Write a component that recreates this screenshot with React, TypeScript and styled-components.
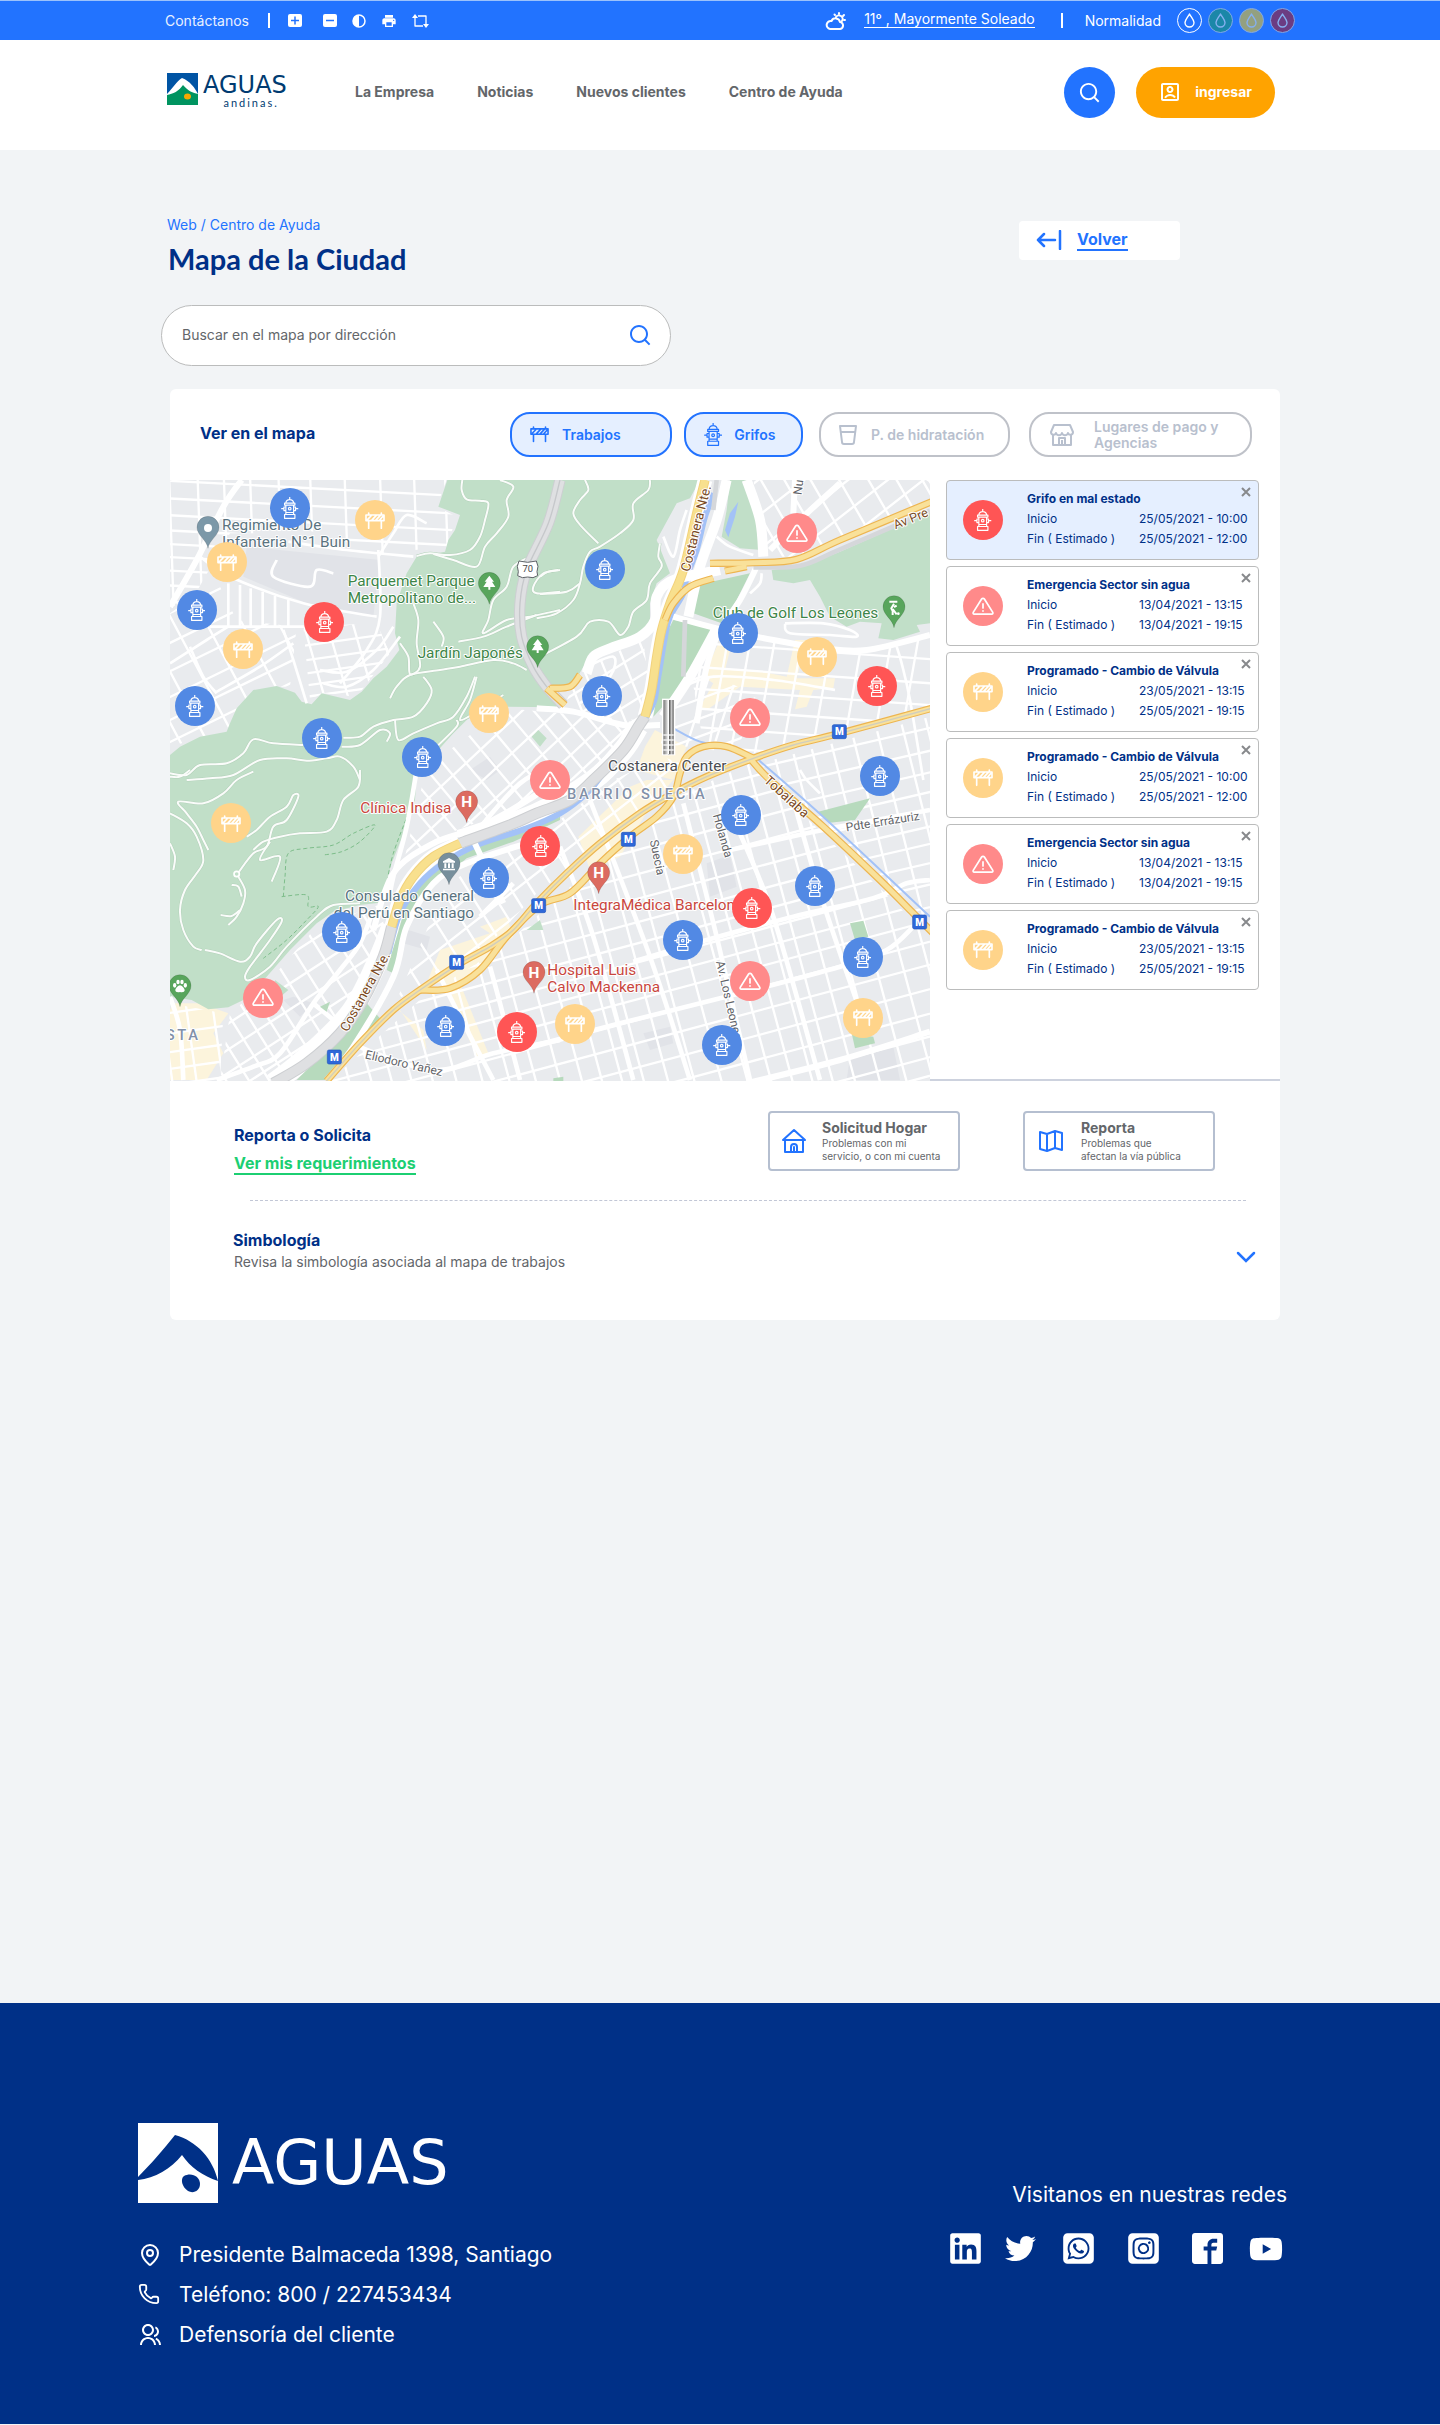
import React, { useState } from "react";
import styled, { createGlobalStyle, css } from "styled-components";
import { RiAccountBoxLine, RiGroupLine, RiSearchLine } from "react-icons/ri";
import { MdLocalPrintshop } from "react-icons/md";
import { FaLinkedin, FaTwitter, FaSquareWhatsapp, FaSquareInstagram, FaYoutube } from "react-icons/fa6";
import { ImFacebook2 } from "react-icons/im";
import { MapPin as MapPinIcon, Phone } from "lucide-react";

const color = {
  blue: "#2273ff",
  navy: "#003087",
  paleBlue: "#e5efff",
  gray: "#63666a",
  muted: "#b5bfd0",
  line: "#bbbcbc",
  page: "#f2f4f6",
  orange: "#ffa300",
  green: "#1ccf72",
};

const GlobalStyle = createGlobalStyle`
  *, *::before, *::after { box-sizing: border-box; }
  body {
    margin: 0;
    background: ${color.page};
    color: ${color.gray};
    font-family: Inter, "Liberation Sans", sans-serif;
    font-size: 14px;
    line-height: 20px;
  }
  button, input { font: inherit; color: inherit; }
  button { cursor: pointer; padding: 0; border: 0; background: none; }
  a { color: inherit; text-decoration: none; }
  h1, h2, h3, p, ul, dl, dd { margin: 0; padding: 0; }
  ul { list-style: none; }
  svg { display: block; flex: none; }
`;

/* ---------- Icons ---------- */

const HydrantIcon = ({ height = 22 }: { height?: number }) => (
  <svg height={height} viewBox="-1 -1 54 68" fill="none" stroke="currentColor" strokeWidth="3.600" strokeLinejoin="round" strokeLinecap="round">
    <path d="M26 0v6M14 17c1-7 5-10 12-10s11 3 12 10M10 18h32v6H10zM14 24v29M38 24v29M14 30H8v11h6M38 30h6v11h-6M8 35H1M44 35h7M14 47h24M10 53h32v12H10z" />
    <circle cx="26" cy="35" r="4" />
  </svg>
);

const BarrierIcon = ({ width = 20 }: { width?: number }) => (
  <svg width={width} viewBox="0 0 60 52" fill="none" stroke="currentColor" strokeWidth="5" strokeLinejoin="round" strokeLinecap="round">
    <path d="M3 9h54v17H3zM11 3v6M49 3v6M11 27v22M49 27v22M8 22l10-10M20 25l14-15M32 25l14-15M44 24l9-10" />
  </svg>
);

const AlertIcon = ({ width = 22 }: { width?: number }) => (
  <svg width={width} viewBox="0 0 64 54" fill="none" stroke="currentColor" strokeWidth="5" strokeLinejoin="round" strokeLinecap="round">
    <path d="M28 6 4 44c-2 4 0 6 4 6h48c4 0 6-2 4-6L36 6c-2-3-6-3-8 0z" />
    <path d="M32 20v12M32 40v1" />
  </svg>
);

const CupIcon = () => (
  <svg width="18" height="20" viewBox="0 0 18 20" fill="none" stroke="currentColor" strokeWidth="2" strokeLinejoin="round">
    <path d="M1 1h16l-2 16c0 1-1 2-2 2H5c-1 0-2-1-2-2zM2 7h14" />
  </svg>
);

const ShopIcon = () => (
  <svg width="26" height="24" viewBox="0 0 26 24" fill="none" stroke="currentColor" strokeWidth="2" strokeLinejoin="round">
    <path d="M5 2h16l3 7c0 3-4 4-5 1-1 3-5 3-6 0-1 3-5 3-6 0-1 3-5 2-5-1zM4 12v10h18V12M10 22v-7h6v7M13 17v5" />
  </svg>
);

const HouseIcon = () => (
  <svg width="26" height="26" viewBox="0 0 26 26" fill="none" stroke={color.blue} strokeWidth="2" strokeLinejoin="round" strokeLinecap="round">
    <path d="M2 12 13 2l11 10zM4 13v11h18V13M10 24v-5c0-4 6-4 6 0v5M13 19v5" />
  </svg>
);

const FoldedMapIcon = () => (
  <svg width="24" height="22" viewBox="0 0 24 22" fill="none" stroke={color.blue} strokeWidth="2" strokeLinejoin="round" strokeLinecap="round">
    <path d="m1 2 7 2 8-3 7 2v17l-7-2-8 3-7-2zM8 4v17M16 1v17" />
  </svg>
);

const BackIcon = () => (
  <svg width="26" height="20" viewBox="0 0 26 20" fill="none" stroke={color.blue} strokeWidth="2.500" strokeLinejoin="round" strokeLinecap="round">
    <path d="M24 1v18M19 10H2M8 4l-6 6 6 6" />
  </svg>
);

const WeatherIcon = () => (
  <svg width="21" height="18" viewBox="0 0 21 18" fill="none" stroke="#fff" strokeWidth="2" strokeLinecap="round" strokeLinejoin="round">
    <path d="M5 17h9a3.500 3.500 0 0 0 1-7 4.500 4.500 0 0 0-8.500-1A4 4 0 0 0 5 17zM11 5a3.500 3.500 0 0 1 6 4" />
    <path d="M14 1v1M19 3l-1 1M20 8h-1M9.500 2.500l.5.5" />
  </svg>
);

const CloseIcon = () => (
  <svg width="10" height="10" viewBox="0 0 10 10" fill="none" stroke="currentColor" strokeWidth="2">
    <path d="m1 1 8 8M9 1 1 9" />
  </svg>
);

const ChevronIcon = () => (
  <svg width="20" height="12" viewBox="0 0 20 12" fill="none" stroke={color.blue} strokeWidth="2.500" strokeLinecap="round">
    <path d="m2 2 8 8 8-8" />
  </svg>
);

const ZoomBoxIcon = ({ plus }: { plus?: boolean }) => (
  <svg width="14" height="13" viewBox="0 0 14 13">
    <rect width="14" height="13" rx="2" fill="#fff" />
    <path d={plus ? "M3 6.500h8M7 2.500v8" : "M3 6.500h8"} stroke={color.blue} strokeWidth="1.500" />
  </svg>
);

const ContrastIcon = () => (
  <svg width="14" height="14" viewBox="0 0 14 14">
    <circle cx="7" cy="7" r="6" fill="none" stroke="#fff" strokeWidth="1.500" />
    <path d="M7 1a6 6 0 0 0 0 12z" fill="#fff" />
  </svg>
);

const ResetIcon = () => (
  <svg width="17" height="14" viewBox="0 0 17 14" fill="none" stroke="#fff" strokeWidth="1.300" strokeLinejoin="round">
    <path d="M3 3v9h8M6 2h8v9" />
    <path d="M0 4 3 0l3 4zM11 10l3 4 3-4z" fill="#fff" stroke="none" />
  </svg>
);

const DropIcon = () => (
  <svg width="11" height="15" viewBox="0 0 11 15" fill="none" stroke="currentColor" strokeWidth="1.400" strokeLinejoin="round">
    <path d="M5.500 1C4 4 1 7 1 9.500a4.500 4.500 0 0 0 9 0C10 7 7 4 5.500 1z" />
  </svg>
);

/* ---------- Top bar ---------- */

const TopBar = styled.div`
  display: flex;
  justify-content: space-between;
  align-items: center;
  height: 40px;
  padding: 0 145px 0 165px;
  border-top: 1px solid #9cc2fb;
  background: ${color.blue};
  color: #fff;
`;

const BarGroup = styled.div`
  display: flex;
  align-items: center;
`;

const BarLink = styled.a`
  opacity: 0.9;
`;

const BarSeparator = styled.span<{ $before: number; $after: number }>`
  width: 2px;
  height: 15px;
  margin: 0 ${(p) => p.$after}px 0 ${(p) => p.$before}px;
  background: #fff;
`;

const BarTools = styled.div`
  display: flex;
  align-items: center;
  gap: 15px;
`;

const BarTool = styled.button`
  display: flex;
  &:first-child { margin-right: 6px; }
`;

const WeatherLink = styled.a`
  margin: 0 0 3px 18px;
  line-height: 17px;
  border-bottom: 1px solid #fff;
`;

const Levels = styled.div`
  display: flex;
  gap: 6px;
  margin-left: 16px;
`;

const Level = styled.button<{ $fill: string; $on?: boolean }>`
  display: flex;
  align-items: center;
  justify-content: center;
  width: 25px;
  height: 25px;
  border-radius: 50%;
  border: 1px solid ${(p) => (p.$on ? "#fff" : "#80a8e8")};
  background: ${(p) => p.$fill};
  color: ${(p) => (p.$on ? "#fff" : "#86b0f0")};
`;

/* ---------- Header ---------- */

const HeaderBar = styled.header`
  display: flex;
  align-items: center;
  height: 110px;
  padding: 0 165px 6px 167px;
  background: #fff;
`;

const Brand = styled.a`
  display: flex;
  align-items: flex-start;
  gap: 5px;
  width: 188px;
  margin-top: -2px;
`;

const BrandWords = styled.span`
  display: flex;
  flex-direction: column;
  align-items: flex-end;
  color: #003b71;
`;

const BrandName = styled.span`
  font-family: "DejaVu Sans", sans-serif;
  font-size: 24px;
  line-height: 24px;
`;

const BrandSub = styled.span`
  padding-right: 8px;
  font-family: Lato, sans-serif;
  font-size: 11px;
  line-height: 12px;
  letter-spacing: 2px;
`;

const Nav = styled.nav`
  display: flex;
  gap: 43px;
  font-weight: 700;
`;

const HeaderActions = styled.div`
  display: flex;
  gap: 21px;
  margin-left: auto;
`;

const RoundButton = styled.button`
  display: flex;
  align-items: center;
  justify-content: center;
  width: 51px;
  height: 51px;
  border-radius: 50%;
  background: ${color.blue};
  color: #fff;
`;

const LoginButton = styled.button`
  display: flex;
  align-items: center;
  gap: 13px;
  height: 51px;
  padding: 0 23px 0 22px;
  border-radius: 26px;
  background: ${color.orange};
  color: #fff;
  font-weight: 700;
`;

/* ---------- Page head ---------- */

const Main = styled.main`
  padding: 65px 160px 683px 161px;
`;

const PageHead = styled.div`
  display: flex;
  justify-content: space-between;
  align-items: flex-start;
  margin: 0 100px 28px 6px;
`;

const Crumbs = styled.nav`
  color: ${color.blue};
`;

const Title = styled.h1`
  margin: 6px 0 0 1px;
  color: ${color.navy};
  font-family: Lato, Inter, sans-serif;
  font-size: 29px;
  line-height: 36px;
  font-weight: 700;
`;

const BackBox = styled.a`
  display: flex;
  align-items: center;
  gap: 15px;
  width: 161px;
  height: 39px;
  margin-top: 6px;
  padding: 0 0 2px 17px;
  border-radius: 4px;
  background: #fff;
  color: ${color.blue};
  font-size: 16px;
  font-weight: 700;
`;

const BackText = styled.span`
  line-height: 20px;
  border-bottom: 2px solid ${color.blue};
`;

const SearchForm = styled.form`
  display: flex;
  align-items: center;
  width: 510px;
  height: 61px;
  margin-bottom: 23px;
  padding: 0 18px 2px 20px;
  border: 1px solid ${color.line};
  border-radius: 31px;
  background: #fff;
  color: ${color.blue};
`;

const SearchInput = styled.input`
  flex: 1;
  min-width: 0;
  padding: 0;
  border: 0;
  outline: 0;
  background: none;
  color: ${color.gray};
  &::placeholder { color: ${color.gray}; opacity: 1; }
`;

/* ---------- Map card ---------- */

const Card = styled.section`
  margin-left: 9px;
  border-radius: 6px;
  background: #fff;
`;

const Toolbar = styled.div`
  display: flex;
  align-items: center;
  justify-content: space-between;
  height: 91px;
  padding: 0 28px 0 30px;
`;

const Heading = styled.h2`
  color: ${color.navy};
  font-size: 16px;
  line-height: 20px;
  font-weight: 700;
`;

const ToolbarHeading = styled(Heading)`
  padding-bottom: 3px;
`;

const Filters = styled.div`
  display: flex;
  gap: 16px;
`;

const FilterGroup = styled.div<{ $gap: number }>`
  display: flex;
  gap: ${(p) => p.$gap}px;
`;

const Chip = styled.button<{ $on: boolean; $width: number; $gap: number }>`
  display: flex;
  align-items: center;
  gap: ${(p) => p.$gap}px;
  width: ${(p) => p.$width}px;
  height: 45px;
  padding-left: 18px;
  border-radius: 20px;
  font-weight: 600;
  line-height: 16px;
  text-align: left;
  ${(p) =>
    p.$on
      ? css`
          border: 2px solid ${color.blue};
          background: ${color.paleBlue};
          color: ${color.blue};
        `
      : css`
          border: 2px solid #bfc2c9;
          background: #fff;
          color: #b8c0ce;
        `}
`;

const ChipText = styled.span<{ $narrow?: boolean }>`
  max-width: ${(p) => (p.$narrow ? "132px" : "none")};
`;

const MapRow = styled.div`
  display: grid;
  grid-template-columns: minmax(0, 1fr) 350px;
`;

const MapCanvas = styled.div`
  position: relative;
  height: 601px;
  overflow: hidden;
  border-radius: 2px 6px 0 0;
  background: #e9ebee;
`;

const MapArt = styled.svg`
  width: 100%;
  height: 100%;
`;

type Kind = "grifo" | "averia" | "trabajo" | "emergencia";

const kindColor: Record<Kind, string> = {
  grifo: "#5289e4",
  averia: "#ff5555",
  trabajo: "#ffd48a",
  emergencia: "#ff8a8a",
};

const MapPin = styled.button<{ $kind: Kind }>`
  position: absolute;
  display: flex;
  align-items: center;
  justify-content: center;
  width: 40px;
  height: 40px;
  margin: -20px 0 0 -20px;
  border-radius: 50%;
  background: ${(p) => kindColor[p.$kind]};
  color: #fff;
`;

const Badge = styled.span<{ $kind: Kind }>`
  display: flex;
  align-items: center;
  justify-content: center;
  width: 40px;
  height: 40px;
  border-radius: 50%;
  background: ${(p) => kindColor[p.$kind]};
  color: #fff;
`;

const SidePanel = styled.ul`
  display: flex;
  flex-direction: column;
  gap: 6px;
  padding: 0 21px 0 16px;
  border-bottom: 2px solid #cdd2de;
`;

const Notice = styled.li<{ $on?: boolean }>`
  display: grid;
  grid-template-columns: 64px minmax(0, 1fr);
  align-items: center;
  position: relative;
  height: 80px;
  padding-left: 16px;
  border: 1px solid ${color.line};
  border-radius: 4px;
  background: ${(p) => (p.$on ? color.paleBlue : "#fff")};
  color: ${color.navy};
  font-size: 12px;
`;

const NoticeText = styled.div`
  padding-bottom: 2px;
`;

const NoticeTitle = styled.h3`
  font-size: 12px;
  line-height: 20px;
  font-weight: 700;
`;

const NoticeTimes = styled.dl`
  display: grid;
  grid-template-columns: 112px 1fr;
  line-height: 20px;
`;

const CloseButton = styled.button`
  position: absolute;
  top: 6px;
  right: 7px;
  color: #87898c;
`;

/* ---------- Requests and symbols ---------- */

const Requests = styled.div`
  display: flex;
  align-items: flex-start;
  justify-content: space-between;
  padding: 30px 65px 25px 64px;
`;

const RequestIntro = styled.div`
  padding-top: 14px;
`;

const GreenLink = styled.a`
  display: inline-block;
  margin-top: 8px;
  border-bottom: 2px solid ${color.green};
  color: ${color.green};
  font-size: 16px;
  line-height: 20px;
  font-weight: 700;
`;

const RequestCards = styled.div`
  display: flex;
  gap: 63px;
`;

const RequestButton = styled.button<{ $gap: number }>`
  display: flex;
  align-items: center;
  gap: ${(p) => p.$gap}px;
  width: 192px;
  height: 60px;
  padding-left: ${(p) => p.$gap - 4}px;
  border: 2px solid ${color.muted};
  border-radius: 4px;
  text-align: left;
`;

const RequestTitle = styled.span`
  display: block;
  font-weight: 700;
  line-height: 18px;
`;

const RequestText = styled.span`
  display: block;
  font-size: 10px;
  line-height: 13px;
`;

const Divider = styled.hr`
  height: 0;
  margin: 0 34px 0 80px;
  border: 0;
  border-top: 1px dashed #c2c7d6;
`;

const Symbols = styled.div`
  display: flex;
  align-items: center;
  justify-content: space-between;
  padding: 29px 24px 48px 63px;
`;

const SymbolsText = styled.p`
  padding: 2px 0 0 1px;
`;

const ExpandButton = styled.button`
  padding-top: 12px;
`;

/* ---------- Footer ---------- */

const Footer = styled.footer`
  display: flex;
  justify-content: space-between;
  padding: 120px 153px 77px 138px;
  background: ${color.navy};
  color: #fff;
  font-size: 21px;
  line-height: 24px;
`;

const FooterBrand = styled.div`
  display: flex;
  align-items: center;
  gap: 14px;
  margin-bottom: 40px;
  font-family: "DejaVu Sans", sans-serif;
  font-size: 62px;
  line-height: 80px;
`;

const ContactList = styled.ul`
  display: flex;
  flex-direction: column;
  gap: 16px;
`;

const ContactItem = styled.li`
  display: grid;
  grid-template-columns: 41px 1fr;
`;

const Social = styled.div`
  display: flex;
  flex-direction: column;
  align-items: flex-end;
  gap: 24px;
  padding-top: 60px;
`;

const SocialLinks = styled.div`
  display: grid;
  grid-template-columns: 57px 56px 65px 66px 57px 34px;
  align-items: center;
  padding-right: 4px;
`;

/* ---------- Map drawing ---------- */

type Pt = [number, number];
const origin: Record<string, Pt> = { N: [0, 0], A: [-30, -30], B: [1110, -30], C: [-30, 870], D: [1110, 870] };

// Each road is "<sheet> x,y x,y ..."; the sheet letter names the quarter its points are measured in.
const points = (road: string): Pt[] => {
  const [sheet, ...rest] = road.trim().split(/\s+/);
  const [ox, oy] = origin[sheet];
  return rest.map((p) => {
    const [x, y] = p.split(",").map(Number);
    return [x + ox, y + oy];
  });
};

const curve = (road: string) => {
  const p = points(road);
  let d = `M${p[0]}`;
  for (let i = 0; i < p.length - 1; i++) {
    const a = p[i - 1] || p[i];
    const b = p[i];
    const c = p[i + 1];
    const e = p[i + 2] || c;
    d += `C${b[0] + (c[0] - a[0]) / 6},${b[1] + (c[1] - a[1]) / 6} ${c[0] - (e[0] - b[0]) / 6},${c[1] - (e[1] - b[1]) / 6} ${c}`;
  }
  return d;
};

const Roads = ({ list, width, stroke, dash }: { list: string[]; width: number; stroke: string; dash?: string }) => (
  <g fill="none" stroke={stroke} strokeWidth={width} strokeLinejoin="round" strokeDasharray={dash}>
    {list.map((r) => (
      <path key={r} d={curve(r)} />
    ))}
  </g>
);

const Areas = ({ list, fill }: { list: string[]; fill: string }) => (
  <g fill={fill}>
    {list.map((r) => (
      <polygon key={r} points={points(r).join(" ")} />
    ))}
  </g>
);

interface District {
  id: string;
  area: string;
  a: number;
  gapA: number;
  b: number;
  gapB: number;
}

const districts: District[] = [
  { id: "se", area: "N 1110,1300 1500,960 1740,850 2280,1370 2280,1803 480,1803 760,1550 1000,1400", a: 75, gapA: 68, b: -15, gapB: 62 },
  { id: "east", area: "N 1560,560 1640,450 2090,515 2280,470 2280,680 1870,790 1750,820 1600,790", a: 100, gapA: 78, b: 4, gapB: 66 },
  { id: "wedge", area: "N 1770,850 2280,710 2280,1330", a: 76, gapA: 66, b: -13, gapB: 58 },
  { id: "north", area: "N 1750,0 2280,0 2280,60 1880,230 1790,230", a: 60, gapA: 66, b: -38, gapB: 74 },
  { id: "nw", area: "N 0,0 830,0 800,80 860,110 830,200 640,220 380,140 300,160 180,160 60,370 0,380", a: 88, gapA: 92, b: 3, gapB: 46 },
  { id: "west", area: "N 0,400 140,300 200,420 380,440 360,620 250,620 170,750 0,800", a: 62, gapA: 84, b: -26, gapB: 70 },
  { id: "loop", area: "N 400,440 620,430 660,520 560,650 460,640 420,660", a: 74, gapA: 66, b: -8, gapB: 40 },
  { id: "sw", area: "N 180,1600 300,1500 440,1340 640,1270 640,1400 480,1680 330,1803 150,1803", a: 58, gapA: 56, b: -33, gapB: 66 },
  { id: "corner", area: "N 0,1570 160,1600 150,1803 0,1803", a: 82, gapA: 70, b: -8, gapB: 56 },
  { id: "indisa", area: "N 770,860 1010,685 1400,720 1300,850 1100,960 860,1050 700,1150", a: 50, gapA: 58, b: -43, gapB: 66 },
  { id: "suecia", area: "N 830,1210 1100,1070 1330,900 1480,830 1530,850 1500,930 1100,1240 960,1390 680,1560", a: 58, gapA: 62, b: -38, gapB: 70 },
  { id: "costanera", area: "N 1420,480 1240,560 1180,680 1400,740 1440,640", a: 68, gapA: 56, b: -32, gapB: 60 },
  { id: "leones", area: "N 1540,560 1500,700 1470,790 1700,820 1760,640", a: 108, gapA: 70, b: -20, gapB: 56 },
];

const DistrictGrid = ({ d }: { d: District }) => {
  const p = points(d.area);
  const cx = p.reduce((s, q) => s + q[0], 0) / p.length;
  const cy = p.reduce((s, q) => s + q[1], 0) / p.length;
  const family = (angle: number, gap: number, seed: number) => {
    const r = (angle * Math.PI) / 180;
    const u: Pt = [Math.cos(r), Math.sin(r)];
    const lines = [];
    for (let i = -20; i <= 20; i++) {
      const t = i * gap + Math.sin(i * 7 + seed) * gap * 0.22;
      const x = cx - u[1] * t;
      const y = cy + u[0] * t;
      lines.push(`M${x - u[0] * 1300} ${y - u[1] * 1300}L${x + u[0] * 1300} ${y + u[1] * 1300}`);
    }
    return lines.join("");
  };
  return (
    <g clipPath={`url(#district-${d.id})`} fill="none" stroke="#fff" strokeWidth="7">
      <clipPath id={`district-${d.id}`}>
        <polygon points={p.join(" ")} />
      </clipPath>
      <path d={family(d.a, d.gapA, 1)} />
      <path d={family(d.b, d.gapB, 2)} />
    </g>
  );
};

const parks = [
  "N 832,0 805,80 870,105 855,150 835,180 825,215 740,230 710,280 680,370 675,460 688,510 650,560 610,595 575,635 540,660 455,640 425,673 395,665 375,638 320,618 250,630 200,685 180,730 170,755 90,770 30,800 0,825 0,1550 65,1560 115,1588 175,1582 220,1560 290,1490 360,1410 440,1330 490,1295 570,1275 655,1265 650,1200 665,1150 705,1050 735,960 740,890 755,870 805,810 850,760 900,710 1010,680 1160,682 1155,640 1220,595 1240,560 1270,520 1320,505 1410,470 1440,430 1440,370 1460,310 1500,280 1460,180 1520,70 1560,55 1590,0",
  "B 570,30 620,30 650,120 665,240 600,235 545,200 560,120",
  "B 695,300 800,285 900,245 1170,125 1170,460 1130,465 1140,485 1060,510 1015,505 1025,460 960,455 920,470 870,440 840,380 810,330 760,340 700,330",
  "C 345,630 385,660 350,690",
  "C 1100,480 1140,450 1150,480",
  "C 970,150 990,140 1000,155 960,180",
  "A 1115,800 1135,780 1160,805 1140,830",
];

const riverParks = [
  "B 470,345 630,310 590,390 545,460 460,430",
  "B 400,450 530,475 450,620 340,740 370,560 385,480",
  "C 1200,150 1060,215 920,265 830,340 760,430 700,610 680,600 740,400 800,320 930,240 1200,140",
  "C 620,700 660,745 500,930 410,930 560,780",
  "C 480,710 510,695 500,725",
  "D 835,125 990,85 945,150 870,158",
  "D 930,460 970,452 985,500 945,510",
  "D 935,790 1000,800 1005,820 945,835",
  "D 40,925 70,920 70,935 40,935",
  "C 980,560 1010,540 1000,570",
];

const shops = [
  "B 535,520 570,540 555,600 640,600 740,620 765,510 800,510 770,625 885,625 880,655 820,660 800,710 765,718 780,660 600,650 500,720 480,712 520,640 490,620",
  "B 315,830 345,780 440,830 400,930 290,900",
  "D 115,200 270,50 320,30 400,30 330,110 240,260 150,300",
  "C 840,540 990,490 960,470 1040,440 1060,500 900,640 800,640",
  "C 690,700 790,780 800,840 720,720",
  "C 835,600 900,640 985,850 950,860",
  "C 40,700 120,700 205,730 160,790 190,850 140,930 30,930 30,720",
];

const blocks = [
  "A 260,230 660,270 640,440 440,400 250,320",
  "D 500,280 570,255 590,350 510,380",
  "D 930,860 1060,830 1080,930 920,930",
  "D 310,790 390,770 400,820 330,840",
  "C 745,480 810,500 800,540 730,520",
  "C 370,690 400,680 460,700 420,740",
  "A 930,900 990,860 1020,900 980,930",
];

const trails = [
  "A 907,30 905,60 920,88 960,92 985,100 975,150 960,200 930,240 870,255 810,250 770,258",
  "A 1020,30 1060,50 1040,90 1045,140 1010,190 975,230 950,290 880,270 820,252",
  "A 1110,260 1060,290 1040,350 1000,390 985,450 970,490 1040,450 1110,440 1200,420",
  "A 760,400 775,450 770,520 780,590 750,612 745,560 720,520",
  "A 820,455 850,500 845,530",
  "A 895,515 970,500 1040,470 1130,435",
  "A 1100,600 1060,580 1000,570 900,590 840,600 750,615 710,650 690,685",
  "A 790,620 815,660 800,700 760,740 700,750 640,770 600,800 550,803",
  "A 945,620 920,680 880,740 830,760 760,790 715,810 705,750",
  "A 950,620 930,690 900,750 960,720 1030,675",
  "A 545,830 600,825 660,780 690,790 680,815",
  "A 890,750 890,770 830,830",
  "A 30,910 80,915 120,885 200,880 250,850 280,808 340,820 430,825",
  "A 80,930 150,925 220,915 300,870 380,865 440,872 500,865 540,860 580,890 600,930",
  "A 1200,300 1150,310 1120,350 1130,370 1200,365",
  "B 330,30 325,60 280,100 280,150 240,190 180,230 150,245 130,290 120,340 100,390 50,430 -10,445",
  "B 120,340 80,365 0,372",
  "B 135,30 145,60 120,90 100,130 125,170 175,220",
  "B 360,220 355,260 365,290 330,340 320,390 280,425 265,470 240,495 205,455 150,455 110,500 0,560",
  "B 0,320 25,305 55,300",
  "C 600,0 595,50 550,90 530,150 500,185 420,190 360,200 310,215 280,240",
  "C 30,20 60,20 90,0",
  "C 280,5 230,30 190,70 130,100 55,95 80,130 110,170 130,210 145,240",
  "C 235,308 280,250 320,230 340,170 380,150 415,80 400,75 380,110 330,140 290,180 260,200",
  "C 330,215 300,270 360,260 335,335",
  "C 235,320 255,360 250,400 230,440 205,465",
  "C 182,435 215,438 240,420",
  "C 215,345 235,350 245,380",
  "C 30,130 80,160 110,200 130,270 110,310 75,360 60,420 70,480 100,530 125,540",
  "C 135,540 180,550 240,575 270,560 290,520 350,450 365,455 330,510 270,590 255,620 270,630 330,590 380,530 470,440 520,405 600,400",
  "C 30,220 45,260 40,300",
];

const dashedTrails = [
  "C 370,380 375,320 385,250 440,235 520,225 580,190 645,165 600,215 545,245 490,255",
  "C 365,380 440,375 445,410 475,410 440,450 380,510 310,565",
  "C 745,130 700,250 680,340",
];

const streets = [
  "A 120,260 210,320 430,400 650,440",
  "A 385,215 560,240 760,260",
  "A 205,340 205,470",
  "A 240,345 240,470",
  "A 272,355 272,470",
  "A 308,365 308,470",
  "A 345,378 345,470",
  "A 385,390 385,470",
  "A 150,470 480,470",
  "A 30,580 140,510 205,470",
  "A 90,530 130,620 170,670",
  "A 170,665 300,590 400,520",
  "A 370,480 400,570 440,700",
  "A 490,640 560,650 640,600 720,500",
  "A 480,600 560,605 650,540 700,470",
  "A 655,240 660,440 620,540 540,640",
  "A 655,260 700,190 740,135 800,160",
  "A 350,270 340,320 450,350 470,300 520,310",
  "B 630,370 660,340 665,310",
  "B 735,460 750,490 870,495 950,500 930,480 850,460 735,460",
  "B 1070,530 1085,580 1110,690 1150,930",
  "B 370,200 400,260 420,180 440,120",
  "B 530,200 570,230 640,255",
  "B 410,660 520,620 700,630 885,660",
  "B 140,590 220,560 210,620 120,700",
  "D 840,70 800,30 780,0",
];

const avenues = [
  "C 640,420 600,520 540,600 460,700 360,850 280,890 170,930",
  "C 460,700 580,800 620,840 830,900 1000,850 1200,810",
  "D -10,825 240,760 600,670 900,590 1040,540 1120,470",
  "D 280,575 500,510 760,440 1000,385 1100,340 1170,330",
  "D 60,230 160,500 280,930",
  "D 150,90 330,560 450,930",
  "D 430,100 530,500 630,930",
  "D 600,190 700,440 840,930",
  "D 760,90 850,400 980,780",
  "C 990,590 1020,700 1080,930",
  "C 830,600 900,740 1000,930",
  "D 570,240 800,190 900,170 1170,120",
  "C 770,0 740,170 700,320 690,370",
  "C 945,190 1080,40 1200,-20",
  "C 30,680 60,780 70,930",
  "C 1060,340 960,440",
];

const bigRoads = [
  "A 245,30 190,110 110,270 30,410",
  "B 400,440 530,475 700,510 850,535 980,540 1170,495",
  "B 690,240 790,140 900,40",
  "B 765,30 760,130",
  "B -10,715 100,725 250,765 360,765",
  "B 650,290 600,390 540,480 500,590 470,760",
  "C 1030,400 935,200",
  "C 640,480 700,310 820,220 960,170 1120,80 1200,20",
  "C 500,930 580,830 700,620 740,470 820,340 920,280 1100,220",
  "D 620,940 900,870 1170,785",
];

const hugeRoads = [
  "B 560,30 530,150 480,290 445,440",
  "B 620,30 660,150 670,260",
  "B 530,475 450,620 370,740",
  "B 140,610 160,560 210,535 300,500 345,450 350,380 400,330 540,300",
  "N 1405,740 1360,810 1270,900 1100,1000 870,1080",
  "N 665,1340 620,1450 540,1600 400,1740 310,1810",
];

const river = ["N 1632,40 1605,110 1580,210 1550,290 1540,340 1500,410 1485,470 1465,590 1450,670 1410,740 1370,800 1300,880 1250,940 1170,1000 1070,1045 920,1095 820,1150 750,1210 690,1300 655,1420"];
const stream = ["N 510,1650 420,1740 320,1803", "N 1510,745 1590,785 1680,800", "N 1760,835 1970,1020 2280,1310"];

const tunnels = [
  "N 1425,710 1405,740 1360,810 1270,900 1200,960 1100,1000 1020,1035 870,1090",
  "N 665,1340 640,1430 580,1560 510,1660 410,1750 310,1810",
  "N 1170,0 1135,130 1070,270 1050,370 1055,470 1090,560 1130,620 1180,675",
];
const viaducts = ["B 640,292 780,287 900,238 1170,122", "B 530,30 520,120", "B 435,450 430,620"];

const motorway = ["N 1605,0 1580,100 1540,270 1500,370 1475,450 1460,530 1445,630 1425,710", "N 870,1090 790,1130 730,1190 690,1260 665,1340"];

const yellowAvenues = [
  "N 2285,685 2010,760 1870,795 1750,835 1610,890 1510,940 1410,1000 1290,1090 1190,1180 1100,1270 1030,1350 960,1400 870,1450 750,1530 670,1590 570,1690 470,1803",
  "N 1750,835 1670,800 1600,800 1550,830 1530,880 1510,950 1460,1010 1380,1070 1290,1150 1200,1240 1110,1275 1010,1370 930,1470 840,1525 750,1530",
  "N 1740,835 1800,900 1960,1040 2130,1200 2230,1300 2290,1360",
  "B 510,280 640,278 770,268 900,210 1175,95",
  "B 555,303 620,290",
  "B 520,325 450,350 400,400 375,450",
  "B 30,655 90,650 120,615",
  "B 20,655 75,705",
];

const halo = { paintOrder: "stroke" as const, stroke: "#fff", strokeWidth: 6, strokeLinejoin: "round" as const };

const PlaceLabel = ({ x, y, lines, fill, end }: { x: number; y: number; lines: string[]; fill: string; end?: boolean }) => (
  <text x={x} y={y} fontSize="46" fill={fill} textAnchor={end ? "end" : "start"} {...halo}>
    {lines.map((l, i) => (
      <tspan key={l} x={x} dy={i ? 51 : 0}>
        {l}
      </tspan>
    ))}
  </text>
);

const StreetLabel = ({ x, y, turn, fill = "#5f6368", size = 36, children }: { x: number; y: number; turn: number; fill?: string; size?: number; children: string }) => (
  <text transform={`translate(${x} ${y}) rotate(${turn})`} y={size / 3} fontSize={size} fill={fill} textAnchor="middle" {...halo}>
    {children}
  </text>
);

const Marker = ({ x, y, fill, children }: { x: number; y: number; fill: string; children: React.ReactNode }) => (
  <g transform={`translate(${x} ${y})`}>
    <path d="M0 0C-4-26-33-38-33-63a33 33 0 0 1 66 0C33-38 4-26 0 0z" fill={fill} stroke="#00000030" strokeWidth="2" />
    {children}
  </g>
);

const Tree = () => <path d="M0-86-14-68h6l-10 16h15v8h6v-8h15L8-68h6z" fill="#fff" />;
const HospitalLetter = () => (
  <text y="-46" fontSize="46" fontWeight="700" fill="#fff" textAnchor="middle">
    H
  </text>
);

const metro: Pt[] = [
  [2008, 755],
  [1375, 1078],
  [1106, 1277],
  [860, 1447],
  [493, 1731],
  [2249, 1326],
];

const CityMap = () => (
  <MapArt viewBox="0 0 2280 1803" preserveAspectRatio="xMidYMid slice" fontFamily="Roboto, sans-serif" role="img" aria-label="Mapa de Providencia, Santiago">
    <defs>
      <linearGradient id="tower">
        <stop offset="0" stopColor="#777" />
        <stop offset="0.4" stopColor="#ddd" />
        <stop offset="0.5" stopColor="#333" />
        <stop offset="0.8" stopColor="#ccc" />
        <stop offset="1" stopColor="#555" />
      </linearGradient>
    </defs>
    <rect width="2280" height="1803" fill="#e9ebee" />
    <Areas list={shops} fill="#fcf4dc" />
    <Areas list={blocks} fill="#e1e3e8" />
    {districts.map((d) => (
      <DistrictGrid key={d.id} d={d} />
    ))}
    <Areas list={parks} fill="#c1dfc8" />
    <Roads list={trails} width={9} stroke="#b3d1ba" />
    <Roads list={trails} width={6} stroke="#fafcfa" />
    <circle cx="200" cy="1182" r="8" fill="#c1dfc8" stroke="#fff" strokeWidth="5" />
    <Roads list={dashedTrails} width={3} stroke="#7dbd8a" dash="12 8" />
    <Roads list={streets} width={8} stroke="#fff" />
    <Roads list={avenues} width={14} stroke="#fff" />
    <Roads list={hugeRoads.slice(4)} width={62} stroke="#fff" />
    <Roads list={motorway} width={44} stroke="#fff" />
    <Areas list={riverParks} fill="#b7dabd" />
    <polygon points="1705,65 1680,100 1665,150 1675,172 1695,110" fill="#a3c2f7" />
    <Roads list={river} width={18} stroke="#a3c2f7" />
    <Roads list={stream} width={6} stroke="#a3c2f7" />
    <Roads list={bigRoads} width={18} stroke="#fff" />
    <Roads list={hugeRoads.slice(0, 4)} width={30} stroke="#fff" />
    <Roads list={tunnels} width={34} stroke="#cdcfd2" />
    <Roads list={tunnels} width={28} stroke="#dfe0e2" />
    <Roads list={[tunnels[2]]} width={4} stroke="#c6c8cb" />
    <Roads list={viaducts} width={14} stroke="#d5d7da" />
    <Roads list={motorway} width={28} stroke="#f2d27c" />
    <Roads list={motorway} width={22} stroke="#f8e08e" />
    <Roads list={yellowAvenues} width={22} stroke="#edb550" />
    <Roads list={yellowAvenues} width={15} stroke="#f9e19a" />
    <Roads list={yellowAvenues.slice(0, 1)} width={4} stroke="#cfcdc0" />

    <g transform="translate(1480 660)">
      <rect x="-4" y="-4" width="40" height="170" fill="#fff" />
      <rect width="31" height="163" fill="url(#tower)" />
      <path d="M0 105h31M0 120h31M0 135h31M0 150h31" stroke="#eee" strokeWidth="4" />
      <path d="M15 0v163" stroke="#fff" strokeWidth="4" />
    </g>

    <StreetLabel x={1578} y={145} turn={-76} fill="#7a4a24" size={40}>Costanera Nte.</StreetLabel>
    <StreetLabel x={585} y={1535} turn={-61} fill="#7a4a24" size={40}>Costanera Nte.</StreetLabel>
    <StreetLabel x={2222} y={116} turn={-22} fill="#7a4a24" size={38}>Av Pre</StreetLabel>
    <StreetLabel x={1850} y={950} turn={42} fill="#7a4a24" size={40}>Tobalaba</StreetLabel>
    <StreetLabel x={2138} y={1025} turn={-9}>Pdte Errázuriz</StreetLabel>
    <StreetLabel x={1658} y={1067} turn={74}>Holanda</StreetLabel>
    <StreetLabel x={1462} y={1132} turn={78}>Suecia</StreetLabel>
    <StreetLabel x={1677} y={1560} turn={77}>Av. Los Leones</StreetLabel>
    <StreetLabel x={702} y={1750} turn={13}>Eliodoro Yañez</StreetLabel>
    <StreetLabel x={1885} y={22} turn={-83}>Nu</StreetLabel>
    <g fontSize="44" fontWeight="500" fill="#8290a8" letterSpacing="8" {...halo}>
      <text x="1612" y="956" textAnchor="end">BARRIO SUECIA</text>
      <text x="92" y="1680" textAnchor="end">STA</text>
    </g>

    {metro.map(([x, y]) => (
      <g key={x} transform={`translate(${x} ${y})`}>
        <rect x="-21" y="-21" width="42" height="42" rx="5" fill="#2f68d8" stroke="#1f56bf" strokeWidth="2" />
        <text y="11" fontSize="30" fontWeight="900" fill="#fff" textAnchor="middle">M</text>
      </g>
    ))}
    <g transform="translate(1073 267)">
      <path d="M-26-24 0-20 26-24 31-8 28 8 30 20 16 26 0 24-16 26-30 20-28 8-31-8z" fill="#fff" stroke="#5f6368" strokeWidth="3" strokeLinejoin="round" />
      <text y="10" fontSize="28" fill="#444" textAnchor="middle">70</text>
    </g>

    <PlaceLabel x={156} y={150} fill="#5a7380" lines={["Regimiento De", "Infanteria N°1 Buin"]} />
    <PlaceLabel x={533} y={317} fill="#3d8548" lines={["Parquemet Parque", "Metropolitano de..."]} />
    <PlaceLabel x={743} y={535} fill="#3d8548" lines={["Jardín Japonés"]} />
    <PlaceLabel x={1628} y={415} fill="#3d8548" lines={["Club de Golf Los Leones"]} />
    <PlaceLabel x={1314} y={873} fill="#4a4d52" lines={["Costanera Center"]} />
    <PlaceLabel x={571} y={1000} fill="#c9463d" lines={["Clínica Indisa"]} />
    <PlaceLabel x={912} y={1262} fill="#5a7380" lines={["Consulado General", "del Perú en Santiago"]} end />
    <PlaceLabel x={1210} y={1290} fill="#c9463d" lines={["IntegraMédica Barcelona"]} />
    <PlaceLabel x={1132} y={1485} fill="#c9463d" lines={["Hospital Luis", "Calvo Mackenna"]} />

    <Marker x={114} y={205} fill="#7c98a8">
      <circle cy="-61" r="12" fill="#fff" />
    </Marker>
    <Marker x={958} y={373} fill="#58a55c"><Tree /></Marker>
    <Marker x={1103} y={563} fill="#58a55c"><Tree /></Marker>
    <Marker x={2172} y={443} fill="#58a55c">
      <path d="M-14-78h24M0-72-8-58l4 8v12M-4-56l12 16M8-66l-8 4" stroke="#fff" strokeWidth="6" fill="none" />
      <circle cx="13" cy="-42" r="4" fill="#fff" />
    </Marker>
    <Marker x={890} y={1028} fill="#dc6b60"><HospitalLetter /></Marker>
    <Marker x={1286} y={1241} fill="#dc6b60"><HospitalLetter /></Marker>
    <Marker x={1092} y={1540} fill="#dc6b60"><HospitalLetter /></Marker>
    <Marker x={837} y={1214} fill="#778f9c">
      <path d="M0-80-18-70v4h36v-4zM-14-64h6v14h-6zM-3-64h6v14h-6zM8-64h6v14H8zM-18-48h36v5h-36z" fill="#fff" />
    </Marker>
    <Marker x={30} y={1580} fill="#58a55c">
      <g fill="#fff">
        <ellipse cx="-16" cy="-64" rx="5" ry="7" />
        <ellipse cx="-6" cy="-74" rx="5" ry="7" />
        <ellipse cx="6" cy="-74" rx="5" ry="7" />
        <ellipse cx="16" cy="-64" rx="5" ry="7" />
        <path d="M0-64c6 0 14 10 14 15s-6 7-14 5c-8 2-14 0-14-5s8-15 14-15z" />
      </g>
    </Marker>
  </MapArt>
);

/* ---------- Data ---------- */

const pins: [Kind, number, number][] = [
  ["grifo", 360, 84],
  ["trabajo", 615, 121],
  ["trabajo", 170, 247],
  ["grifo", 80, 391],
  ["averia", 463, 427],
  ["trabajo", 219, 508],
  ["grifo", 75, 678],
  ["grifo", 455, 773],
  ["trabajo", 956, 700],
  ["grifo", 757, 831],
  ["grifo", 1304, 268],
  ["emergencia", 1881, 159],
  ["grifo", 1703, 459],
  ["trabajo", 1942, 531],
  ["averia", 2121, 618],
  ["grifo", 1296, 649],
  ["emergencia", 1739, 713],
  ["grifo", 2129, 888],
  ["emergencia", 1139, 900],
  ["trabajo", 183, 1030],
  ["averia", 1111, 1098],
  ["grifo", 956, 1194],
  ["grifo", 515, 1357],
  ["emergencia", 278, 1553],
  ["grifo", 826, 1638],
  ["averia", 1040, 1655],
  ["grifo", 1712, 1005],
  ["trabajo", 1539, 1122],
  ["grifo", 1934, 1218],
  ["averia", 1746, 1283],
  ["grifo", 1539, 1381],
  ["grifo", 2078, 1432],
  ["emergencia", 1739, 1503],
  ["trabajo", 1214, 1631],
  ["trabajo", 2078, 1614],
  ["grifo", 1656, 1696],
];

const kindName: Record<Kind, string> = {
  grifo: "Grifo",
  averia: "Grifo en mal estado",
  trabajo: "Trabajo programado",
  emergencia: "Emergencia",
};

const KindIcon = ({ kind }: { kind: Kind }) => {
  if (kind === "trabajo") return <BarrierIcon />;
  if (kind === "emergencia") return <AlertIcon />;
  return <HydrantIcon />;
};

const notices: { kind: Kind; title: string; start: string; end: string }[] = [
  { kind: "averia", title: "Grifo en mal estado", start: "25/05/2021 - 10:00", end: "25/05/2021 - 12:00" },
  { kind: "emergencia", title: "Emergencia Sector sin agua", start: "13/04/2021 - 13:15", end: "13/04/2021 - 19:15" },
  { kind: "trabajo", title: "Programado - Cambio de Válvula", start: "23/05/2021 - 13:15", end: "25/05/2021 - 19:15" },
  { kind: "trabajo", title: "Programado - Cambio de Válvula", start: "25/05/2021 - 10:00", end: "25/05/2021 - 12:00" },
  { kind: "emergencia", title: "Emergencia Sector sin agua", start: "13/04/2021 - 13:15", end: "13/04/2021 - 19:15" },
  { kind: "trabajo", title: "Programado - Cambio de Válvula", start: "23/05/2021 - 13:15", end: "25/05/2021 - 19:15" },
];

const levels = ["transparent", "#1b87a8", "#93a080", "#6b3c82"];

export default function App() {
  const [filters, setFilters] = useState({ works: true, hydrants: true, water: false, offices: false });
  const toggle = (key: keyof typeof filters) => setFilters({ ...filters, [key]: !filters[key] });

  return (
    <>
      <GlobalStyle />
      <TopBar>
        <BarGroup>
          <BarLink href="#contacto">Contáctanos</BarLink>
          <BarSeparator $before={19} $after={18} />
          <BarTools>
            <BarTool aria-label="Aumentar texto"><ZoomBoxIcon plus /></BarTool>
            <BarTool aria-label="Reducir texto"><ZoomBoxIcon /></BarTool>
            <BarTool aria-label="Contraste"><ContrastIcon /></BarTool>
            <BarTool aria-label="Imprimir"><MdLocalPrintshop size={16} /></BarTool>
            <BarTool aria-label="Restablecer"><ResetIcon /></BarTool>
          </BarTools>
        </BarGroup>
        <BarGroup>
          <WeatherIcon />
          <WeatherLink href="#clima">11º , Mayormente Soleado</WeatherLink>
          <BarSeparator $before={26} $after={22} />
          <span>Normalidad</span>
          <Levels>
            {levels.map((fill, i) => (
              <Level key={fill} $fill={fill} $on={i === 0} aria-label={`Nivel ${i + 1}`}>
                <DropIcon />
              </Level>
            ))}
          </Levels>
        </BarGroup>
      </TopBar>

      <HeaderBar>
        <Brand href="#inicio" aria-label="Aguas Andinas">
          <svg width="31" height="32" viewBox="0 0 31 32">
            <rect width="31" height="32" fill="#fff" />
            <path d="M0 0h31v21C28 15 23 8 15 5 10 8 5 16 0 21z" fill="#0054a4" />
            <path d="M0 22c6-1 12-4 16-10 5 6 10 8 15 9v11H0z" fill="#009460" />
            <ellipse cx="20.500" cy="23.500" rx="3.500" ry="3" fill="#f7a800" />
          </svg>
          <BrandWords>
            <BrandName>AGUAS</BrandName>
            <BrandSub>andinas.</BrandSub>
          </BrandWords>
        </Brand>
        <Nav>
          <a href="#empresa">La Empresa</a>
          <a href="#noticias">Noticias</a>
          <a href="#clientes">Nuevos clientes</a>
          <a href="#ayuda">Centro de Ayuda</a>
        </Nav>
        <HeaderActions>
          <RoundButton aria-label="Buscar"><RiSearchLine size={23} /></RoundButton>
          <LoginButton><RiAccountBoxLine size={24} />ingresar</LoginButton>
        </HeaderActions>
      </HeaderBar>

      <Main>
        <PageHead>
          <div>
            <Crumbs><a href="#web">Web</a> / <a href="#ayuda">Centro de Ayuda</a></Crumbs>
            <Title>Mapa de la Ciudad</Title>
          </div>
          <BackBox href="#volver"><BackIcon /><BackText>Volver</BackText></BackBox>
        </PageHead>
        <SearchForm onSubmit={(e) => e.preventDefault()}>
          <SearchInput type="text" aria-label="Buscar en el mapa por dirección" placeholder="Buscar en el mapa por dirección" />
          <button aria-label="Buscar"><RiSearchLine size={24} /></button>
        </SearchForm>

        <Card>
          <Toolbar>
            <ToolbarHeading>Ver en el mapa</ToolbarHeading>
            <Filters>
              <FilterGroup $gap={12}>
                <Chip $on={filters.works} $width={162} $gap={13} aria-pressed={filters.works} onClick={() => toggle("works")}>
                  <BarrierIcon width={19} /><ChipText>Trabajos</ChipText>
                </Chip>
                <Chip $on={filters.hydrants} $width={119} $gap={12} aria-pressed={filters.hydrants} onClick={() => toggle("hydrants")}>
                  <HydrantIcon height={23} /><ChipText>Grifos</ChipText>
                </Chip>
              </FilterGroup>
              <FilterGroup $gap={19}>
                <Chip $on={filters.water} $width={191} $gap={14} aria-pressed={filters.water} onClick={() => toggle("water")}>
                  <CupIcon /><ChipText>P. de hidratación</ChipText>
                </Chip>
                <Chip $on={filters.offices} $width={223} $gap={19} aria-pressed={filters.offices} onClick={() => toggle("offices")}>
                  <ShopIcon /><ChipText $narrow>Lugares de pago y Agencias</ChipText>
                </Chip>
              </FilterGroup>
            </Filters>
          </Toolbar>

          <MapRow>
            <MapCanvas>
              <CityMap />
              {pins.map(([kind, x, y]) => (
                <MapPin key={`${x}-${y}`} $kind={kind} aria-label={kindName[kind]} style={{ left: `${(x / 2280) * 100}%`, top: `${(y / 1803) * 100}%` }}>
                  <KindIcon kind={kind} />
                </MapPin>
              ))}
            </MapCanvas>
            <SidePanel>
              {notices.map((n, i) => (
                <Notice key={i} $on={i === 0}>
                  <Badge $kind={n.kind}><KindIcon kind={n.kind} /></Badge>
                  <NoticeText>
                    <NoticeTitle>{n.title}</NoticeTitle>
                    <NoticeTimes>
                      <dt>Inicio</dt>
                      <dd>{n.start}</dd>
                      <dt>Fin ( Estimado )</dt>
                      <dd>{n.end}</dd>
                    </NoticeTimes>
                  </NoticeText>
                  <CloseButton aria-label="Cerrar"><CloseIcon /></CloseButton>
                </Notice>
              ))}
            </SidePanel>
          </MapRow>

          <Requests>
            <RequestIntro>
              <Heading>Reporta o Solicita</Heading>
              <GreenLink href="#requerimientos">Ver mis requerimientos</GreenLink>
            </RequestIntro>
            <RequestCards>
              <RequestButton $gap={15}>
                <HouseIcon />
                <span>
                  <RequestTitle>Solicitud Hogar</RequestTitle>
                  <RequestText>Problemas con mi<br />servicio, o con mi cuenta</RequestText>
                </span>
              </RequestButton>
              <RequestButton $gap={18}>
                <FoldedMapIcon />
                <span>
                  <RequestTitle>Reporta</RequestTitle>
                  <RequestText>Problemas que<br />afectan la vía pública</RequestText>
                </span>
              </RequestButton>
            </RequestCards>
          </Requests>
          <Divider />
          <Symbols>
            <div>
              <Heading>Simbología</Heading>
              <SymbolsText>Revisa la simbología asociada al mapa de trabajos</SymbolsText>
            </div>
            <ExpandButton aria-label="Mostrar simbología"><ChevronIcon /></ExpandButton>
          </Symbols>
        </Card>
      </Main>

      <Footer>
        <div>
          <FooterBrand>
            <svg width="80" height="80" viewBox="0 0 80 80">
              <rect width="80" height="80" fill="#fff" />
              <path d="M0 54C12 42 26 26 37 12c22 6 38 24 43 46C65 53 52 44 44 32 33 46 17 55 0 57z" fill={color.navy} />
              <path d="M46 53c7-4 16 0 16 8 0 7-7 10-12 7-6-4-8-12-4-15z" fill={color.navy} />
            </svg>
            AGUAS
          </FooterBrand>
          <ContactList>
            <ContactItem><MapPinIcon size={24} />Presidente Balmaceda 1398, Santiago</ContactItem>
            <ContactItem><Phone size={22} />Teléfono: 800 / 227453434</ContactItem>
            <ContactItem><RiGroupLine size={24} />Defensoría del cliente</ContactItem>
          </ContactList>
        </div>
        <Social>
          <p>Visitanos en nuestras redes</p>
          <SocialLinks>
            <a href="#linkedin" aria-label="LinkedIn"><FaLinkedin size={35} /></a>
            <a href="#twitter" aria-label="Twitter"><FaTwitter size={31} /></a>
            <a href="#whatsapp" aria-label="WhatsApp"><FaSquareWhatsapp size={35} /></a>
            <a href="#instagram" aria-label="Instagram"><FaSquareInstagram size={35} /></a>
            <a href="#facebook" aria-label="Facebook"><ImFacebook2 size={31} /></a>
            <a href="#youtube" aria-label="YouTube"><FaYoutube size={34} /></a>
          </SocialLinks>
        </Social>
      </Footer>
    </>
  );
}
